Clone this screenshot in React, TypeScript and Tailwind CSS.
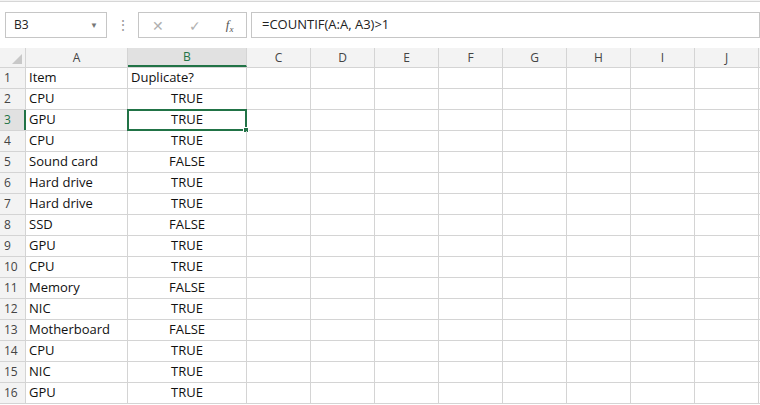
import React from "react";

const rows: [string, string][] = [
  ["Item", "Duplicate?"],
  ["CPU", "TRUE"],
  ["GPU", "TRUE"],
  ["CPU", "TRUE"],
  ["Sound card", "FALSE"],
  ["Hard drive", "TRUE"],
  ["Hard drive", "TRUE"],
  ["SSD", "FALSE"],
  ["GPU", "TRUE"],
  ["CPU", "TRUE"],
  ["Memory", "FALSE"],
  ["NIC", "TRUE"],
  ["Motherboard", "FALSE"],
  ["CPU", "TRUE"],
  ["NIC", "TRUE"],
  ["GPU", "TRUE"],
];
const cols = ["C", "D", "E", "F", "G", "H", "I", "J"];

export default function App() {
  return (
    <div className="w-[760px] h-[405px] overflow-hidden bg-white relative" style={{ fontFamily: '"Open Sans", "Liberation Sans", sans-serif' }}>
      <div className="h-[2px] bg-[#f3f3f3] border-b border-[#d6d6d6]" />
      <div className="flex items-center h-[46px] pt-[10px] pb-[10px] bg-white">
        <div className="ml-[5px] w-[102px] h-[26px] border border-[#c6c6c6] flex items-center justify-between px-[8px] text-[12px] text-[#222]">
          <span>B3</span>
          <span className="text-[8px] text-[#777]">▼</span>
        </div>
        <div className="w-[31px] flex justify-center text-[#999] text-[14px] leading-none">⋮</div>
        <div className="w-[109px] h-[26px] border border-[#c6c6c6] flex items-center justify-around text-[#b0b0b0] text-[14px]">
          <span>✕</span>
          <span>✓</span>
          <span className="italic text-[#555] text-[13px]" style={{ fontFamily: '"Liberation Serif", serif' }}>f<sub className="text-[9px]">x</sub></span>
        </div>
        <div className="ml-[4px] flex-1 h-[26px] border border-[#c6c6c6] flex items-center px-[10px] text-[13px] text-[#222]">=COUNTIF(A:A, A3)&gt;1</div>
      </div>
      <div className="flex h-[20px] bg-[#f3f3f3] border-b border-[#d4d4d4] text-[12px] text-[#444]">
        <div className="w-[26px] border-r border-[#d4d4d4] relative">
          <div className="absolute right-[3px] bottom-[3px] w-0 h-0 border-l-[10px] border-l-transparent border-b-[10px] border-b-[#c8c8c8]" />
        </div>
        <div className="w-[102px] border-r border-[#d4d4d4] flex items-center justify-center">A</div>
        <div className="w-[119px] bg-[#e1e1e1] border-r border-[#d4d4d4] border-b-2 border-b-[#217346] flex items-center justify-center text-[#217346]">B</div>
        {cols.map((c) => (
          <div key={c} className="w-[64px] shrink-0 border-r border-[#d4d4d4] flex items-center justify-center">{c}</div>
        ))}
      </div>
      {rows.map(([a, b], i) => (
        <div key={i} className="flex h-[21px] border-b border-[#d4d4d4] text-[13px] text-[#111]">
          <div className={`w-[26px] shrink-0 flex items-center pl-[4px] text-[12px] ${i === 2 ? "bg-[#e1e1e1] border-r-2 border-r-[#217346] text-[#217346]" : "bg-[#f3f3f3] border-r border-[#d4d4d4] text-[#444]"}`}>{i + 1}</div>
          <div className="w-[102px] shrink-0 border-r border-[#d4d4d4] flex items-center pl-[3px]">{a}</div>
          <div className={`w-[119px] shrink-0 border-r border-[#d4d4d4] flex items-center ${i === 0 ? "pl-[3px]" : "justify-center"} relative`}>
            {b}
            {i === 2 && (
              <>
                <div className="absolute -left-[1px] -top-[1px] -right-[1px] -bottom-[1px] border-2 border-[#217346]" />
                <div className="absolute -right-[3px] -bottom-[3px] w-[6px] h-[6px] bg-[#217346] border border-white" />
              </>
            )}
          </div>
          {cols.map((c) => (
            <div key={c} className="w-[64px] shrink-0 border-r border-[#d4d4d4]" />
          ))}
        </div>
      ))}
    </div>
  );
}
